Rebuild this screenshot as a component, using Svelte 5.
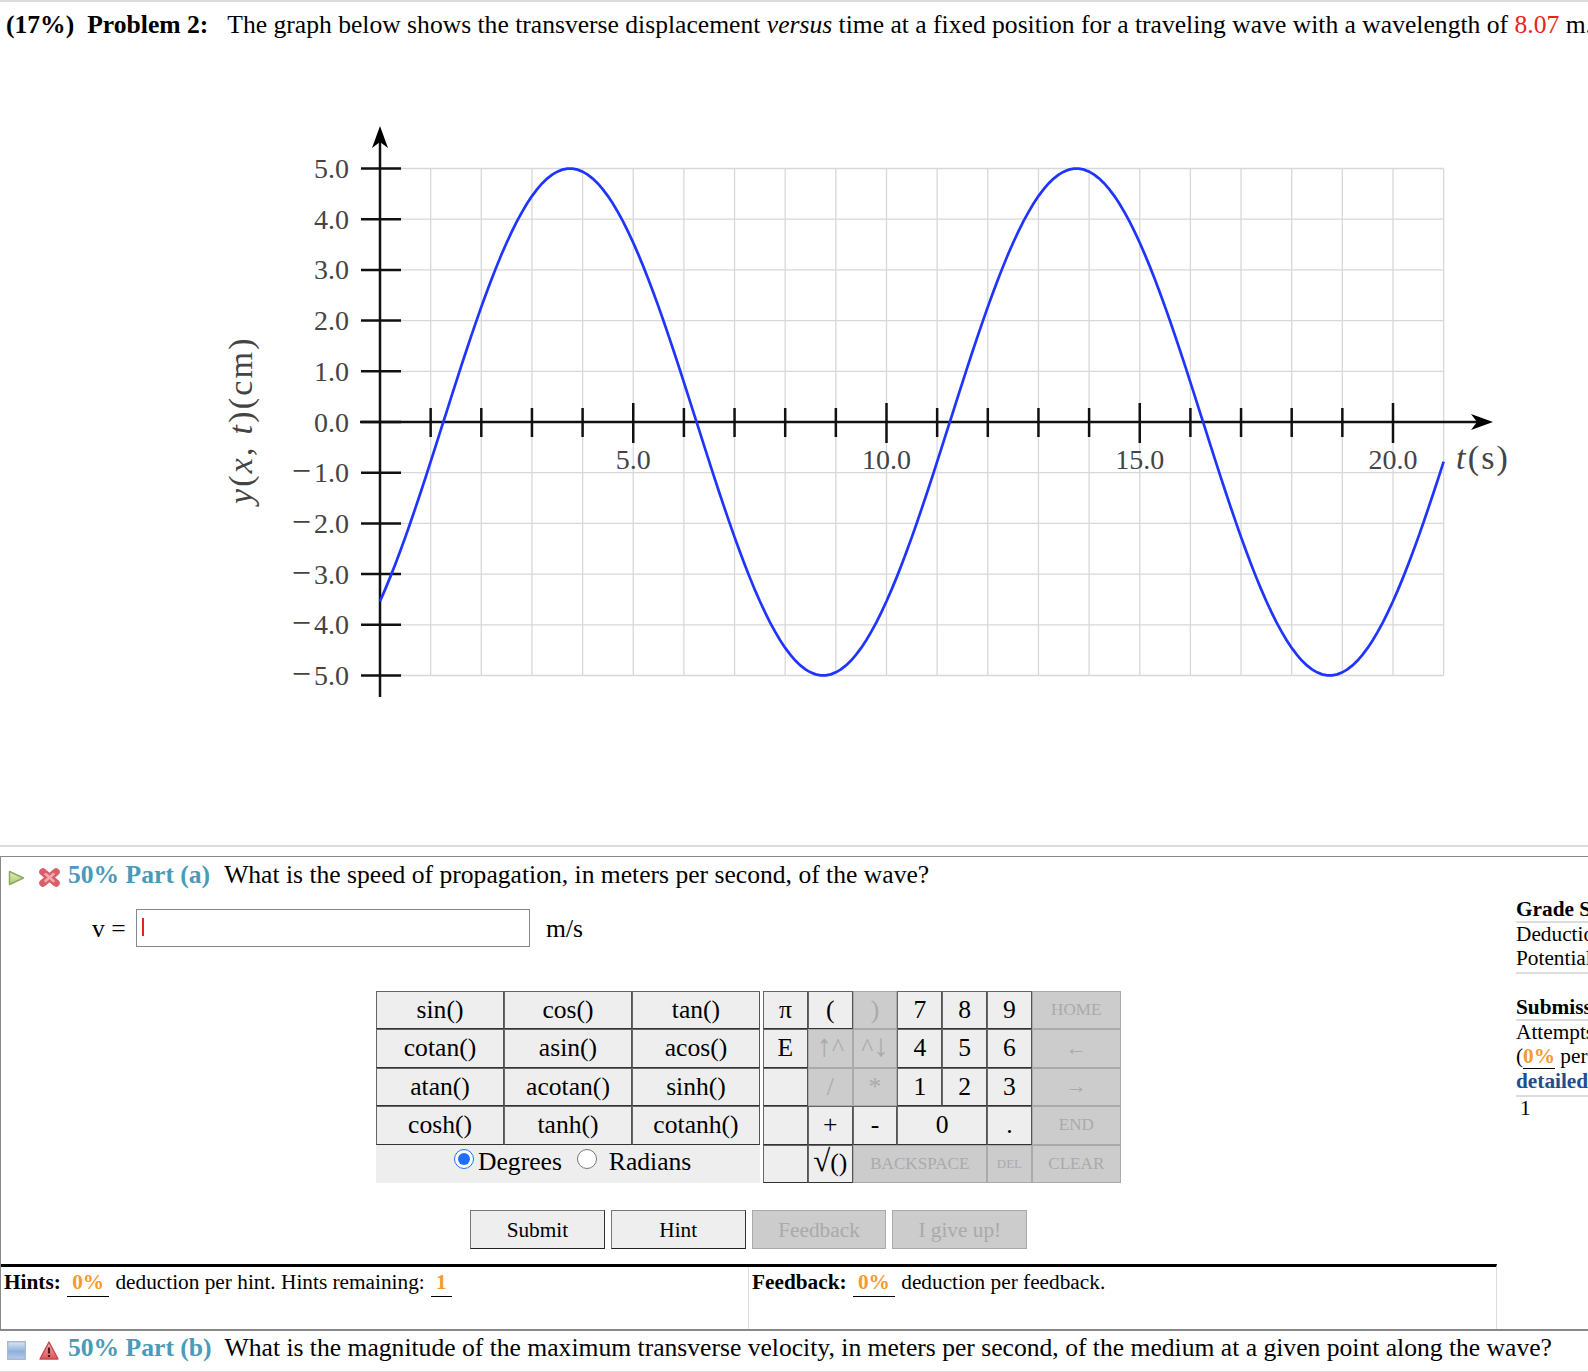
<script>
	// plot scale, in page pixels
	const x0 = 380;
	const y0 = 422;
	const ux = 50.65;
	const uy = 50.7;

	const px = (t) => x0 + t * ux;
	const py = (v) => y0 - v * uy;

	const curve = Array.from({ length: 211 }, (_, i) => {
		const t = i / 10;
		const v = 5 * Math.sin((2 * Math.PI * (t - 1.25)) / 10);
		return `${i ? 'L' : 'M'}${px(t).toFixed(2)} ${py(v).toFixed(2)}`;
	}).join(' ');

	const times = Array.from({ length: 21 }, (_, i) => i + 1);
	const values = [5, 4, 3, 2, 1, 0, -1, -2, -3, -4, -5];

	const fnKeys = [
		'sin()', 'cos()', 'tan()',
		'cotan()', 'asin()', 'acos()',
		'atan()', 'acotan()', 'sinh()',
		'cosh()', 'tanh()', 'cotanh()'
	];

	const padKeys = [
		{ label: 'π' }, { label: '(' }, { label: ')', off: true },
		{ label: '7' }, { label: '8' }, { label: '9' }, { label: 'HOME', off: true, small: true },
		{ label: 'E' }, { label: '↑^', off: true }, { label: '^↓', off: true },
		{ label: '4' }, { label: '5' }, { label: '6' }, { label: '←', off: true, arrow: true },
		{ label: '' }, { label: '/', off: true }, { label: '*', off: true },
		{ label: '1' }, { label: '2' }, { label: '3' }, { label: '→', off: true, arrow: true },
		{ label: '' }, { label: '+' }, { label: '-' }, { label: '0', span: 2 },
		{ label: '.' }, { label: 'END', off: true, small: true },
		{ label: '' }, { label: '√()' }, { label: 'BACKSPACE', off: true, small: true, span: 3 },
		{ label: 'DEL', off: true, tiny: true }, { label: 'CLEAR', off: true, small: true }
	];

	// these glyphs come out small in Liberation Serif
	const isTall = (ch) => ch === '↑' || ch === '↓' || ch === '√';
</script>

<main class="page">
	<h2 class="problem">
		<b>(17%)</b><b class="problem-no">Problem 2:</b><span class="problem-text">The graph below shows the transverse displacement <i>versus</i> time at a fixed position for a traveling wave with a wavelength of <span class="given">8.07</span> m.</span>
	</h2>

	<svg class="plot" width="1588" height="785" viewBox="0 60 1588 785" aria-label="Displacement versus time">
		<defs>
			<path id="head" d="M0 0 L-22 -8 L-16 0 L-22 8 Z" />
		</defs>

		{#each times as t}
			<line class="grid" x1={px(t)} x2={px(t)} y1={py(5)} y2={py(-5)} />
		{/each}
		{#each values as v}
			<line class="grid" x1={x0} x2={px(21)} y1={py(v)} y2={py(v)} />
		{/each}

		<line class="axis" x1={x0} x2={x0} y1="140" y2="697" />
		<line class="axis" x1="360" x2="1480" y1={y0} y2={y0} />
		<use href="#head" transform="translate(1493 {y0})" />
		<use href="#head" transform="translate({x0} 126) rotate(-90)" />

		{#each values as v}
			<line class="axis" x1="361" x2="401" y1={py(v)} y2={py(v)} />
			<text class="tick" x="349" y={py(v) + 9.5} text-anchor="end">{#if v < 0}<tspan class="minus">−</tspan>{/if}{Math.abs(v).toFixed(1)}</text>
		{/each}
		{#each times.slice(0, 20) as t}
			<line class="axis" x1={px(t)} x2={px(t)} y1={t % 5 ? 408 : 403} y2={t % 5 ? 437 : 443} />
		{/each}
		{#each [5, 10, 15, 20] as t}
			<text class="tick" x={px(t)} y="468.5" text-anchor="middle">{t.toFixed(1)}</text>
		{/each}

		<path class="wave" d={curve} />

		<text class="axis-title" x="1456" y="469"><tspan font-style="italic">t</tspan>(s)</text>
		<text class="axis-title" transform="translate(252 504) rotate(-90)"><tspan font-style="italic">y</tspan>(<tspan font-style="italic">x</tspan>, <tspan font-style="italic">t</tspan>)(cm)</text>
	</svg>

	<section class="part">
		<div class="part-main">
			<header class="part-head">
				<svg class="icon play" width="17" height="16" viewBox="0 0 17 16" aria-hidden="true">
					<defs>
						<linearGradient id="play-fill" x1="0" x2="0" y1="0" y2="1">
							<stop offset="0" stop-color="#e4efc0" />
							<stop offset="1" stop-color="#a9cc6a" />
						</linearGradient>
					</defs>
					<path d="M1.5 1.5 L15.5 8 L1.5 14.5 Z" fill="url(#play-fill)" stroke="#8fa86a" stroke-width="1.5" stroke-linejoin="round" />
				</svg>
				<svg class="icon cross" width="23" height="19" viewBox="0 0 23 19" aria-hidden="true">
					<path d="M5 4 L18 15 M18 4 L5 15" stroke="#d9606a" stroke-width="7.5" stroke-linecap="round" />
					<path d="M7.5 6 L15.5 13 M15.5 6 L7.5 13" stroke="#f4a9ad" stroke-width="2.5" stroke-linecap="round" />
				</svg>
				<b class="part-label">50% Part (a)</b>
				<span class="part-question">What is the speed of propagation, in meters per second, of the wave?</span>
			</header>

			<div class="answer">
				<span class="var">v =</span>
				<div class="field"><span class="caret"></span></div>
				<span class="unit">m/s</span>
			</div>

			<div class="keypad">
				<div class="fn-keys">
					{#each fnKeys as key}
						<button type="button" class="key">{key}</button>
					{/each}
					<div class="angle">
						<input type="radio" name="angle" checked aria-label="Degrees" /><span class="angle-text">Degrees</span>
						<input type="radio" name="angle" aria-label="Radians" /><span class="angle-text radians">Radians</span>
					</div>
				</div>
				<div class="pad-keys">
					{#each padKeys as key}
						<button
							type="button"
							class="key"
							class:off={key.off}
							class:small={key.small}
							class:tiny={key.tiny}
							class:arrow={key.arrow}
							class:span2={key.span === 2}
							class:span3={key.span === 3}
						>{#each [...key.label] as ch}{#if isTall(ch)}<span class="tall">{ch}</span>{:else}{ch}{/if}{/each}</button>
					{/each}
				</div>
			</div>

			<div class="actions">
				<button type="button" class="action">Submit</button>
				<button type="button" class="action">Hint</button>
				<button type="button" class="action off">Feedback</button>
				<button type="button" class="action off">I give up!</button>
			</div>

			<div class="info">
				<div class="info-cell hints">
					<b>Hints:</b> <span class="rate">0%</span> deduction per hint. Hints remaining: <span class="rate">1</span>
				</div>
				<div class="info-cell">
					<b>Feedback:</b> <span class="rate">0%</span> deduction per feedback.
				</div>
			</div>
		</div>

		<aside class="summary">
			<div class="summary-block">
				<b class="summary-title">Grade Summary</b>
				<div>Deductions</div>
				<div>Potential</div>
			</div>
			<div class="summary-block second">
				<b class="summary-title">Submissions</b>
				<div>Attempts remaining</div>
				<div>(<b class="rate">0%</b> per attempt)</div>
				<b class="detail">detailed view</b>
			</div>
			<div class="summary-row">1</div>
		</aside>
	</section>

	<header class="part-head part-b">
		<svg class="icon square" width="19" height="19" viewBox="0 0 19 19" aria-hidden="true">
			<defs>
				<linearGradient id="square-fill" x1="0" x2="0" y1="0" y2="1">
					<stop offset="0" stop-color="#dde6f2" />
					<stop offset="0.55" stop-color="#8fb0de" />
					<stop offset="1" stop-color="#b7cbe8" />
				</linearGradient>
			</defs>
			<rect x="0.7" y="0.7" width="17.6" height="17.6" fill="url(#square-fill)" stroke="#a9b8cc" stroke-width="1.4" />
		</svg>
		<svg class="icon warn" width="20" height="19" viewBox="0 0 20 19" aria-hidden="true">
			<defs>
				<linearGradient id="warn-fill" x1="0" x2="0" y1="0" y2="1">
					<stop offset="0" stop-color="#f4b8b8" />
					<stop offset="1" stop-color="#d9555a" />
				</linearGradient>
			</defs>
			<path d="M10 1 L19 18 L1 18 Z" fill="url(#warn-fill)" stroke="#c9474c" stroke-width="1.4" stroke-linejoin="round" />
			<path d="M10 6.5 V12.5 M10 14 V16" stroke="#5a1418" stroke-width="2.2" />
		</svg>
		<b class="part-label">50% Part (b)</b>
		<span class="part-question">What is the magnitude of the maximum transverse velocity, in meters per second, of the medium at a given point along the wave?</span>
	</header>
</main>

<style>
	:global(body) {
		margin: 0;
		background: #fff;
	}

	.page {
		width: 1588px;
		height: 1372px;
		overflow: hidden;
		font-family: "Liberation Serif", "Times New Roman", serif;
		font-size: 25.6px;
		color: #000;
	}

	.problem {
		height: 58px;
		margin: 0;
		padding: 8px 0 0 6px;
		box-sizing: border-box;
		border-top: 2px solid #ddd;
		font-size: 25.6px;
		font-weight: 400;
		line-height: 29px;
		white-space: nowrap;
		overflow: hidden;
	}

	.problem-no {
		margin-left: 13px;
	}

	.problem-text {
		margin-left: 19px;
	}

	.given {
		color: #e8231c;
	}

	.plot {
		display: block;
		margin-top: 2px;
		border-bottom: 2px solid #ddd;
	}

	.grid {
		stroke: #d8d8d8;
		stroke-width: 1.3;
	}

	.axis {
		stroke: #111;
		stroke-width: 2.5;
	}

	.tick {
		font-size: 28px;
		fill: #444;
	}

	.minus {
		font-size: 34px;
		letter-spacing: 3px;
	}

	.axis-title {
		font-size: 34px;
		fill: #444;
		letter-spacing: 2.2px;
	}

	.wave {
		fill: none;
		stroke: #1f35ff;
		stroke-width: 2.7;
	}

	.part {
		display: flex;
		height: 472px;
		margin-top: 9px;
		border-top: 1px solid #888;
		overflow: hidden;
	}

	.part-main {
		flex: none;
		width: 1497px;
		box-sizing: border-box;
		border-left: 1px solid #888;
	}

	.part-head {
		display: flex;
		align-items: center;
		white-space: nowrap;
		height: 36px;
	}

	.part-head .icon {
		flex: none;
		margin-top: 5px;
	}

	.play {
		margin-left: 7px;
	}

	.cross {
		margin-left: 13px;
		margin-right: 7px;
	}

	.part-label {
		color: #4a9aba;
	}

	.part-question {
		margin-left: 14px;
	}

	.answer {
		display: flex;
		align-items: center;
		height: 38px;
		margin-top: 16px;
		padding-left: 91px;
	}

	.var {
		width: 44px;
		padding-top: 2px;
	}

	.field {
		position: relative;
		width: 394px;
		height: 38px;
		box-sizing: border-box;
		border: 1px solid #888;
	}

	.caret {
		position: absolute;
		left: 5px;
		top: 8px;
		width: 1.5px;
		height: 18px;
		background: #e0261f;
	}

	.unit {
		margin-left: 16px;
		padding-top: 2px;
	}

	.keypad {
		display: flex;
		gap: 3px;
		margin: 44px 0 0 375px;
	}

	.fn-keys {
		display: grid;
		grid-template-columns: repeat(3, 128px);
		grid-auto-rows: 38.4px;
		background: #eee;
	}

	.pad-keys {
		display: grid;
		grid-template-columns: repeat(6, 44.8px) 89px;
		grid-auto-rows: 38.4px;
	}

	.key {
		padding: 0 0 1px;
		box-sizing: border-box;
		border: 1px solid;
		border-color: #666 #555 #333 #666;
		background: #eee;
		color: #000;
		font: inherit;
		line-height: 1;
		white-space: nowrap;
	}

	.key.off {
		background: #ccc;
		border-color: #aaa;
		color: #aaa;
	}

	.key.small {
		font-size: 17.1px;
	}

	.key.tiny {
		font-size: 13px;
	}

	.key.arrow {
		font-size: 21px;
	}

	.tall {
		font-size: 31px;
		line-height: 0;
	}

	.span2 {
		grid-column: span 2;
	}

	.span3 {
		grid-column: span 3;
	}

	.angle {
		grid-column: span 3;
		display: flex;
		align-items: center;
		padding: 0 0 4px 78px;
		background: #eee;
	}

	.angle input {
		flex: none;
		width: 20px;
		height: 20px;
		margin: -6px 0 0 0;
		accent-color: #1f6fff;
	}

	.angle-text {
		margin-left: 4px;
		margin-right: 15px;
	}

	.radians {
		margin-left: 12px;
		margin-right: 0;
	}

	.actions {
		display: flex;
		gap: 6px;
		margin: 27px 0 0 469px;
	}

	.action {
		width: 134.8px;
		height: 39px;
		padding: 2px 0 0;
		box-sizing: border-box;
		border: 1px solid;
		border-color: #777 #333 #222 #777;
		background: #eee;
		color: #000;
		font: inherit;
		font-size: 21.3px;
	}

	.action.off {
		background: #ccc;
		border-color: #aaa;
		color: #aaa;
	}

	.info {
		display: flex;
		height: 62px;
		margin-top: 15px;
		border-top: 3px solid #000;
		border-right: 1px solid #ddd;
		font-size: 21.3px;
		line-height: 30px;
	}

	.info-cell {
		flex: 1;
		padding-left: 3px;
	}

	.hints {
		flex: none;
		width: 748px;
		box-sizing: border-box;
		border-right: 1px solid #ddd;
	}

	.rate {
		display: inline-block;
		padding: 0 5px;
		margin: 0 1px;
		border-bottom: 1px solid #000;
		line-height: 28px;
		color: #f59a2e;
		font-weight: 700;
		text-align: center;
	}

	.summary {
		flex: none;
		margin-left: 19px;
		padding-top: 40px;
		width: 200px;
		font-size: 21.3px;
		line-height: 24px;
		white-space: nowrap;
	}

	.summary-block {
		border-bottom: 2px solid #ddd;
		padding-bottom: 2px;
	}

	.summary-block.second {
		margin-top: 21px;
	}

	.summary-title {
		display: block;
		margin-bottom: -1px;
		border-bottom: 2px solid #ddd;
	}

	.summary .rate {
		padding: 0;
		margin: 0;
		line-height: 24px;
	}

	.detail {
		display: block;
		color: #1f4e8c;
	}

	.summary-row {
		margin-top: -1px;
		padding-left: 4px;
	}

	.part-b {
		height: 34px;
		padding-bottom: 6px;
		border-top: 2px solid #888;
		border-bottom: 2px solid #ddd;
		box-sizing: content-box;
	}

	.part-b .part-question {
		margin-left: 13px;
	}

	.square {
		margin-left: 7px;
	}

	.warn {
		margin-left: 13px;
		margin-right: 9px;
	}
</style>
